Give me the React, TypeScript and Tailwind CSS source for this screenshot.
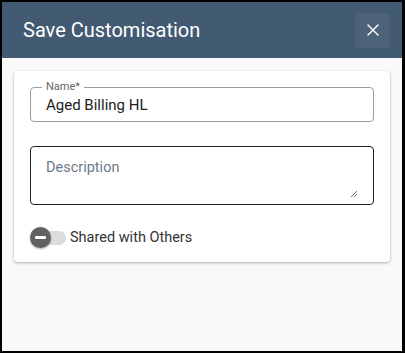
import { X } from "lucide-react";

const font = { fontFamily: "Roboto, 'Noto Sans', sans-serif" };

const Toggle = ({ label }: { label: string }) => (
  <div className="flex items-center h-[22px]">
    <div className="relative w-[38px] h-[22px] flex items-center">
      <div className="ml-[6px] w-[30px] h-[14px] rounded-full bg-[#dcdcdc]" />
      <div className="absolute left-0 top-0 w-[21px] h-[21px] rounded-full bg-[#616161] shadow-[0_1px_2px_rgba(0,0,0,0.35)] flex items-center justify-center">
        <div className="w-[11px] h-[3px] bg-white rounded-[1px]" />
      </div>
    </div>
    <span className="ml-[2px] text-[14.5px] text-[#333]">{label}</span>
  </div>
);

export default function App() {
  return (
    <div
      className="w-[405px] h-[353px] border-l-2 border-t-2 border-b-2 border-r-[3px] border-black bg-[#f9f9f9] flex flex-col"
      style={font}
    >
      <div className="h-[56px] bg-[#425a72] flex items-center justify-between pl-[21px] pr-[12px] shrink-0">
        <h1 className="text-white text-[20px] leading-none">Save Customisation</h1>
        <button className="w-[35px] h-[35px] rounded-[4px] bg-[#4c6279] flex items-center justify-center text-white">
          <X size={20} strokeWidth={1.6} />
        </button>
      </div>
      <div className="px-3 pt-[13px]">
        <div className="bg-white rounded-[4px] shadow-[0_1px_3px_rgba(0,0,0,0.3)] px-4 pt-4 pb-[13px]">
          <div className="relative h-[35px] border border-[#9e9e9e] rounded-[4px] flex items-center px-[15px]">
            <span className="absolute left-[11px] -top-[8px] bg-white px-1 text-[11px] leading-[14px] text-[#666]">
              Name*
            </span>
            <span className="text-[15px] text-[#222] mt-[1px]">Aged Billing HL</span>
          </div>
          <div className="relative mt-[24px] h-[59px] border border-[#222] rounded-[4px] px-[15px] pt-[8px]">
            <span className="text-[14.5px] text-[#6c7a89]">Description</span>
            <svg
              className="absolute right-[15px] bottom-[6px]"
              width="8"
              height="8"
              viewBox="0 0 8 8"
            >
              <path d="M7 1L1 7M7 4L4 7" stroke="#777" strokeWidth="1" />
            </svg>
          </div>
          <div className="mt-[22px]">
            <Toggle label="Shared with Others" />
          </div>
        </div>
      </div>
    </div>
  );
}
